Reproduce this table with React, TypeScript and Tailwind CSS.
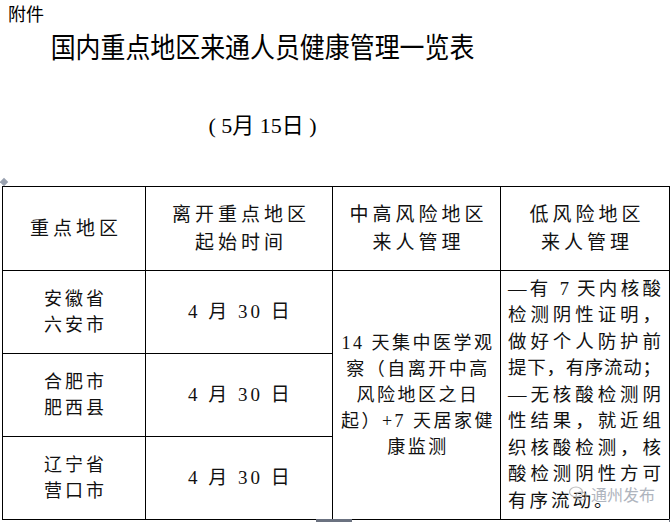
import React from 'react'

const serif = "font-['Liberation_Serif','Noto_Sans_CJK_SC',serif]"

function HeadCell({ lines, w }: { lines: string[]; w: string }) {
  return (
    <th className={`${w} border border-black align-middle text-center font-normal text-[19px] leading-[28px] tracking-[4px] text-[#111] pl-[4px]`}>
      {lines.map((l) => (
        <div key={l}>{l}</div>
      ))}
    </th>
  )
}

const regions = [
  ['安徽省', '六安市'],
  ['合肥市', '肥西县'],
  ['辽宁省', '营口市'],
]

const midText = ['14 天集中医学观', '察（自离开中高', '风险地区之日', '起）+7 天居家健', '康监测']

const lowText = [
  '—有 7 天内核酸',
  '检测阴性证明，',
  '做好个人防护前',
  '提下，有序流动；',
  '—无核酸检测阴',
  '性结果，就近组',
  '织核酸检测，核',
  '酸检测阴性方可',
]

export default function App() {
  return (
    <div className="relative w-[671px] h-[522px] overflow-hidden bg-white text-black">
      <div className="pl-[8px] h-[26px] text-[18px] leading-[26px] font-['Noto_Sans_CJK_SC',sans-serif]">附件</div>
      <div className="w-[525px] text-center h-[40px] leading-[40px] text-[28px] scale-x-[0.89] font-['Noto_Sans_CJK_SC',sans-serif]">
        国内重点地区来通人员健康管理一览表
      </div>
      <div className={`w-[525px] mt-[45px] text-center h-[30px] leading-[30px] text-[22px] ${serif}`}>
        ( 5月 15日 )
      </div>

      <div className="mt-[38px] ml-[1px] h-[6px] w-[6px] rotate-45 bg-gray-400" />

      <table className={`mt-[1px] ml-[2px] w-[667px] border-collapse table-fixed ${serif}`}>
        <thead>
          <tr className="h-[84px]">
            <HeadCell w="w-[143px]" lines={['重点地区']} />
            <HeadCell w="w-[187px]" lines={['离开重点地区', '起始时间']} />
            <HeadCell w="w-[168px]" lines={['中高风险地区', '来人管理']} />
            <HeadCell w="w-[169px]" lines={['低风险地区', '来人管理']} />
          </tr>
        </thead>
        <tbody className="text-[18px] tracking-[3px] text-[#111]">
          {regions.map((r, i) => (
            <tr key={r[0]} className="h-[83px]">
              <td className="border border-black text-center align-middle leading-[26px] pl-[3px]">
                <div>{r[0]}</div>
                <div>{r[1]}</div>
              </td>
              <td className="border border-black text-center align-middle leading-[26px] text-[19px] pl-[3px]">
                4 月 30 日
              </td>
              {i === 0 && (
                <>
                  <td rowSpan={3} className="border border-black text-center align-middle leading-[26px] pl-[3px] tracking-[2.5px]">
                    {midText.map((l) => (
                      <div key={l} className="whitespace-nowrap">{l}</div>
                    ))}
                  </td>
                  <td rowSpan={3} className="border border-black align-middle leading-[26.5px] pl-[7px] pr-[8px] text-[18.5px]">
                    {lowText.map((l) => (
                      <div key={l} className="whitespace-nowrap tracking-normal text-justify [text-align-last:justify]">
                        {l}
                      </div>
                    ))}
                    <div className="whitespace-nowrap">有序流动。</div>
                  </td>
                </>
              )}
            </tr>
          ))}
        </tbody>
      </table>

      {/* watermark */}
      <div className="absolute left-[568px] top-[482px] flex items-center gap-[3px] text-[#9ca3af] opacity-80">
        <svg width="20" height="18" viewBox="0 0 20 18" fill="none" stroke="#b0b0b0" strokeWidth="1.2">
          <ellipse cx="8" cy="7" rx="6.5" ry="5" />
          <ellipse cx="13" cy="11" rx="5" ry="4" />
        </svg>
        <span className="text-[16px] font-['Noto_Sans_CJK_SC',sans-serif]">通州发布</span>
      </div>

      {/* bottom marks */}
      <div className="absolute left-[316px] top-[519px] h-[3px] w-[36px] bg-[#6b7280]" />
      <div className="absolute left-[669px] top-[519px] h-[3px] w-[1px] bg-[#6b7280]" />
    </div>
  )
}
